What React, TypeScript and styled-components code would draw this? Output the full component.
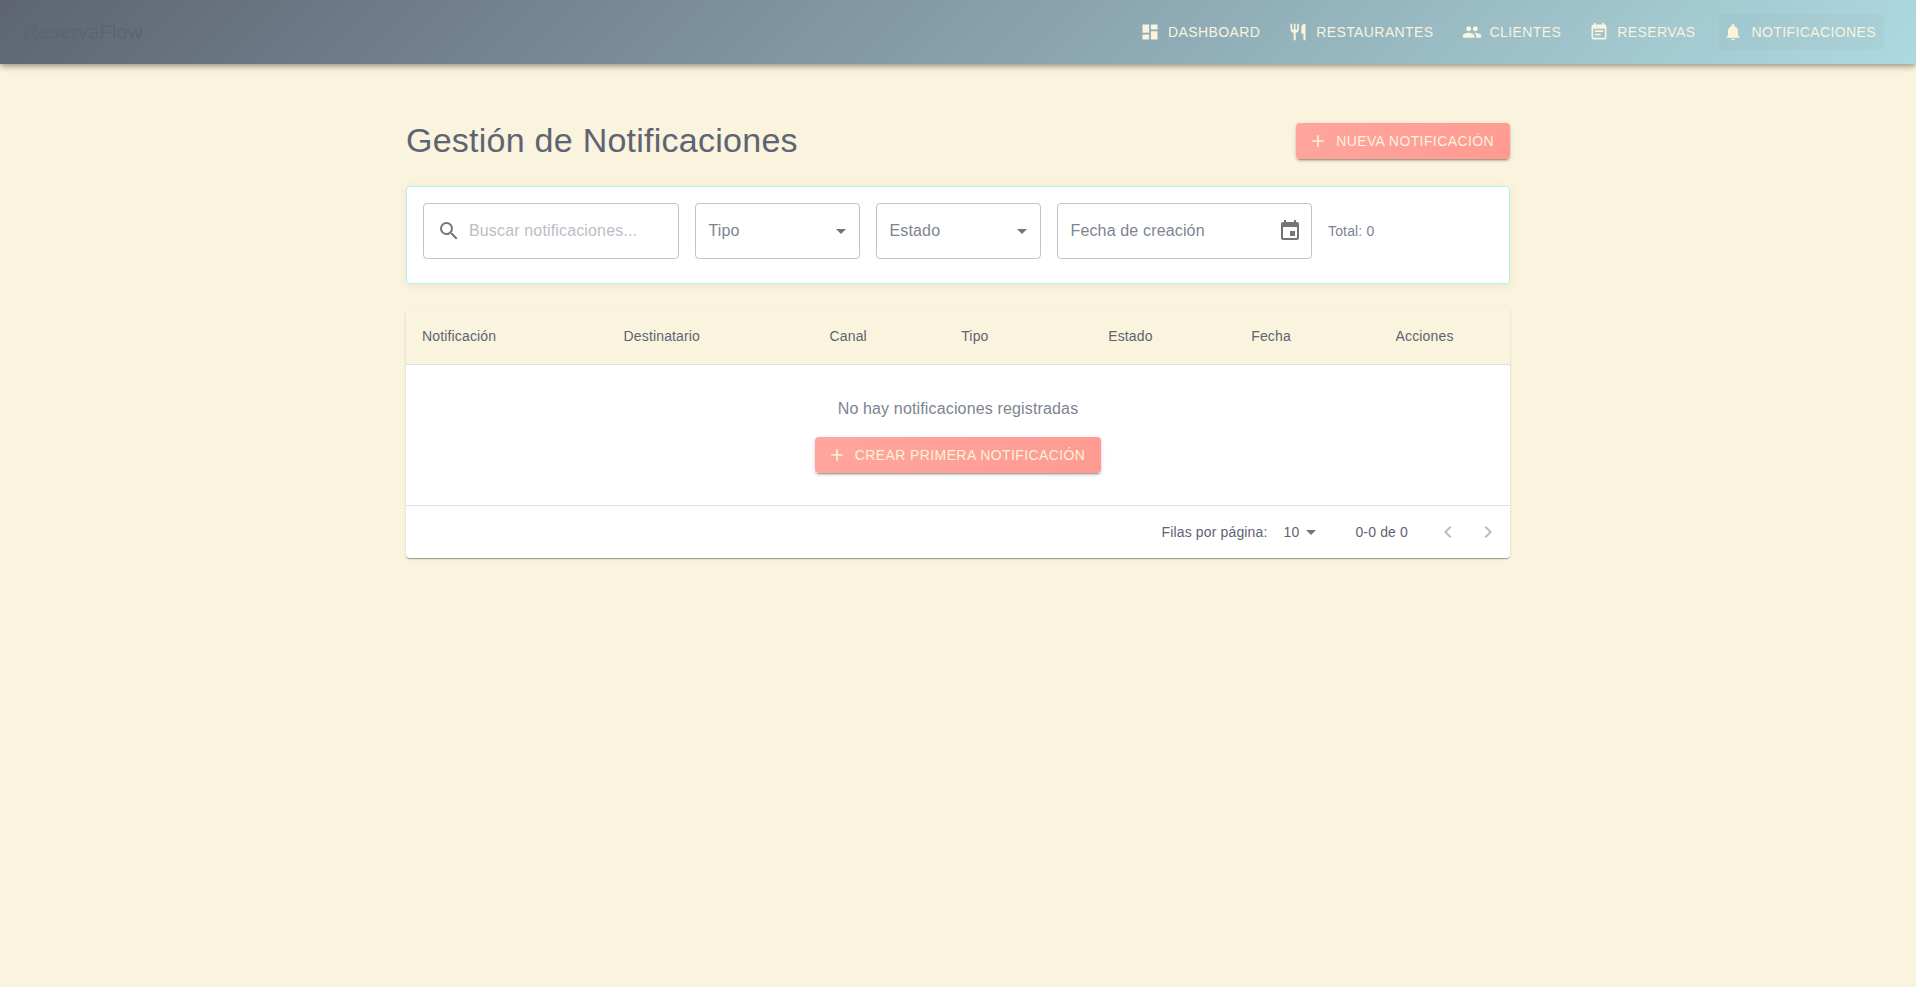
import React from "react";
import styled, { createGlobalStyle } from "styled-components";
import {
  MdAdd,
  MdArrowDropDown,
  MdDashboard,
  MdEvent,
  MdEventNote,
  MdKeyboardArrowLeft,
  MdKeyboardArrowRight,
  MdNotifications,
  MdPeople,
  MdRestaurant,
  MdSearch,
} from "react-icons/md";

const cream = "#faf3dd";
const slate = "#5e6472";
const muted = "#7d8491";
const iconGray = "rgba(0, 0, 0, 0.54)";

const GlobalStyle = createGlobalStyle`
  *, *::before, *::after { box-sizing: border-box; }
  body {
    margin: 0;
    min-height: 100vh;
    background: ${cream};
    color: ${slate};
    font-family: "Liberation Sans", Arial, sans-serif;
    font-size: 16px;
    line-height: 1.5;
    letter-spacing: 0.00938em;
  }
  svg { display: block; flex-shrink: 0; }
`;

const AppBar = styled.header`
  display: flex;
  align-items: center;
  height: 64px;
  padding: 0 24px;
  background: linear-gradient(135deg, ${slate} 0%, #aed9e0 100%);
  box-shadow: 0 2px 4px -1px rgba(0, 0, 0, 0.2), 0 4px 5px 0 rgba(0, 0, 0, 0.14),
    0 1px 10px 0 rgba(0, 0, 0, 0.12);
`;

const Brand = styled.div`
  flex-grow: 1;
  font-size: 20px;
  font-weight: 500;
  line-height: 1.6;
  letter-spacing: 0.0075em;
`;

const Nav = styled.nav`
  display: flex;
`;

const ButtonBase = styled.button`
  display: inline-flex;
  align-items: center;
  justify-content: center;
  gap: 8px;
  border: 0;
  border-radius: 4px;
  color: ${cream};
  font-family: inherit;
  font-size: 14px;
  font-weight: 500;
  line-height: 1.75;
  letter-spacing: 0.02857em;
  text-transform: uppercase;
  white-space: nowrap;
  cursor: pointer;

  svg {
    margin-left: -4px;
    font-size: 20px;
  }
`;

const NavButton = styled(ButtonBase)<{ $active?: boolean }>`
  margin: 0 8px;
  padding: 6px 8px;
  background: ${({ $active }) => ($active ? "rgba(94, 100, 114, 0.04)" : "transparent")};
`;

const PrimaryButton = styled(ButtonBase)`
  padding: 6px 16px;
  background: linear-gradient(135deg, #ffa69e 0%, #ff9a92 100%);
  box-shadow: 0 3px 1px -2px rgba(0, 0, 0, 0.2), 0 2px 2px 0 rgba(0, 0, 0, 0.14),
    0 1px 5px 0 rgba(0, 0, 0, 0.12);
`;

const Page = styled.main`
  max-width: 1152px;
  margin: 32px auto 0;
  padding: 24px;
`;

const TitleRow = styled.div`
  display: flex;
  align-items: center;
  justify-content: space-between;
  margin-bottom: 24px;
`;

const Title = styled.h1`
  margin: 0;
  font-size: 34px;
  font-weight: 400;
  line-height: 1.235;
  letter-spacing: 0.00735em;
`;

const FilterCard = styled.section`
  display: grid;
  grid-template-columns: 255.5px 165px 165px 255.5px 1fr;
  gap: 16px;
  align-items: center;
  margin-bottom: 24px;
  padding: 16px 16px 24px;
  background: #fff;
  border: 1px solid #b8f2e6;
  border-radius: 4px;
  box-shadow: 0 2px 8px rgba(94, 100, 114, 0.1);
`;

const Field = styled.div<{ $end?: number }>`
  display: flex;
  align-items: center;
  justify-content: space-between;
  height: 56px;
  padding: 0 ${({ $end = 14 }) => $end - 1}px 0 13px;
  border: 1px solid rgba(0, 0, 0, 0.23);
  border-radius: 4px;
  color: ${muted};

  svg {
    color: ${iconGray};
    font-size: 24px;
  }
`;

const SearchInput = styled.input`
  flex: 1;
  min-width: 0;
  margin-left: 8px;
  padding: 0;
  border: 0;
  outline: 0;
  background: none;
  color: ${slate};
  font: inherit;
  letter-spacing: inherit;

  &::placeholder {
    color: ${slate};
    opacity: 0.42;
  }
`;

const Total = styled.span`
  color: ${muted};
  font-size: 14px;
  line-height: 1.43;
  letter-spacing: 0.01071em;
`;

const TableCard = styled.section`
  overflow: hidden;
  background: #fff;
  border-radius: 4px;
  box-shadow: 0 2px 1px -1px rgba(0, 0, 0, 0.2), 0 1px 1px 0 rgba(0, 0, 0, 0.14),
    0 1px 3px 0 rgba(0, 0, 0, 0.12);
`;

const Table = styled.table`
  width: 100%;
  border-collapse: collapse;
  border-spacing: 0;
`;

const HeadCell = styled.th<{ $centered?: boolean }>`
  padding: 16px;
  background: ${cream};
  border-bottom: 1px solid #e0e0e0;
  font-size: 14px;
  font-weight: 500;
  line-height: 24px;
  letter-spacing: 0.01071em;
  text-align: ${({ $centered }) => ($centered ? "center" : "left")};
`;

const EmptyCell = styled.td`
  padding: 32px 16px;
  border-bottom: 1px solid #e0e0e0;
  text-align: center;
`;

const EmptyState = styled.div`
  display: flex;
  flex-direction: column;
  align-items: center;
  gap: 16px;
  color: ${muted};
`;

const Pagination = styled.footer`
  display: flex;
  align-items: center;
  justify-content: flex-end;
  height: 52px;
  padding-right: 2px;
  font-size: 14px;
  line-height: 1.43;
  letter-spacing: 0.01071em;
`;

const RowsSelect = styled.div`
  display: flex;
  align-items: center;
  margin: 0 32px 0 8px;
  padding-left: 8px;

  svg {
    color: ${iconGray};
    font-size: 24px;
  }
`;

const PagerActions = styled.div`
  display: flex;
  margin-left: 20px;
`;

const PagerButton = styled.button`
  padding: 8px;
  border: 0;
  background: none;
  color: rgba(0, 0, 0, 0.26);
  font-size: 24px;
`;

const navItems = [
  { label: "Dashboard", Icon: MdDashboard },
  { label: "Restaurantes", Icon: MdRestaurant },
  { label: "Clientes", Icon: MdPeople },
  { label: "Reservas", Icon: MdEventNote },
  { label: "Notificaciones", Icon: MdNotifications, active: true },
];

const columns = [
  { name: "Notificación" },
  { name: "Destinatario" },
  { name: "Canal" },
  { name: "Tipo" },
  { name: "Estado", centered: true },
  { name: "Fecha", centered: true },
  { name: "Acciones", centered: true },
];

export default function App() {
  return (
    <>
      <GlobalStyle />
      <AppBar>
        <Brand>ReservaFlow</Brand>
        <Nav>
          {navItems.map(({ label, Icon, active }) => (
            <NavButton key={label} $active={active}>
              <Icon />
              {label}
            </NavButton>
          ))}
        </Nav>
      </AppBar>
      <Page>
        <TitleRow>
          <Title>Gestión de Notificaciones</Title>
          <PrimaryButton>
            <MdAdd />
            Nueva Notificación
          </PrimaryButton>
        </TitleRow>
        <FilterCard>
          <Field>
            <MdSearch />
            <SearchInput placeholder="Buscar notificaciones..." />
          </Field>
          <Field $end={7}>
            Tipo
            <MdArrowDropDown />
          </Field>
          <Field $end={7}>
            Estado
            <MdArrowDropDown />
          </Field>
          <Field $end={10}>
            Fecha de creación
            <MdEvent />
          </Field>
          <Total>Total: 0</Total>
        </FilterCard>
        <TableCard>
          <Table>
            <thead>
              <tr>
                {columns.map(({ name, centered }) => (
                  <HeadCell key={name} $centered={centered}>
                    {name}
                  </HeadCell>
                ))}
              </tr>
            </thead>
            <tbody>
              <tr>
                <EmptyCell colSpan={columns.length}>
                  <EmptyState>
                    No hay notificaciones registradas
                    <PrimaryButton>
                      <MdAdd />
                      Crear Primera Notificación
                    </PrimaryButton>
                  </EmptyState>
                </EmptyCell>
              </tr>
            </tbody>
          </Table>
          <Pagination>
            <span>Filas por página:</span>
            <RowsSelect>
              10
              <MdArrowDropDown />
            </RowsSelect>
            <span>0-0 de 0</span>
            <PagerActions>
              <PagerButton aria-label="Página anterior">
                <MdKeyboardArrowLeft />
              </PagerButton>
              <PagerButton aria-label="Página siguiente">
                <MdKeyboardArrowRight />
              </PagerButton>
            </PagerActions>
          </Pagination>
        </TableCard>
      </Page>
    </>
  );
}
